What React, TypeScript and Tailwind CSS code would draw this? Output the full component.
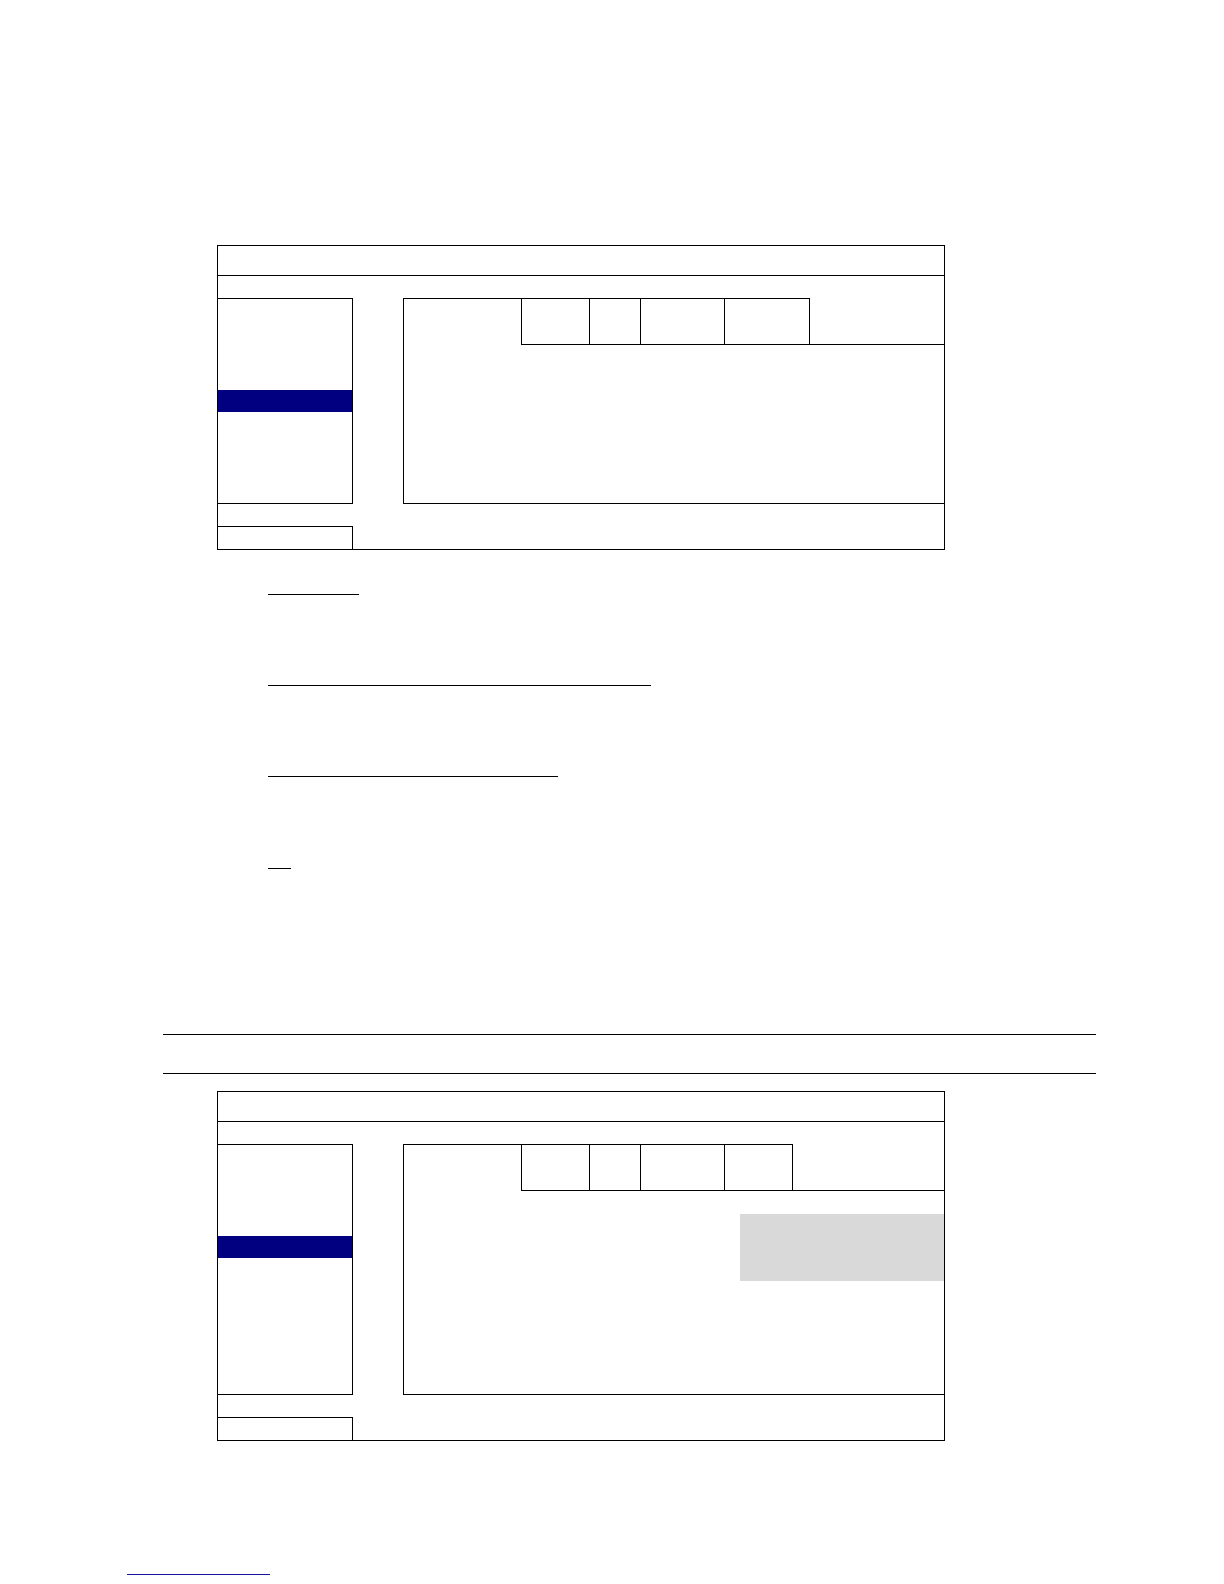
import React from 'react';

type Panel = {
  cellWidths: number[]; // widths of the bordered header cells
  bodyHeight: string;
  showPopup?: boolean;
};

// widths are written out so Tailwind picks them up
const cellClass: Record<number, string> = {
  68: 'w-[68px]',
  51: 'w-[51px]',
  84: 'w-[84px]',
  85: 'w-[85px]',
  69: 'w-[69px]',
};

const MenuScreen: React.FC<Panel> = ({ cellWidths, bodyHeight, showPopup }) => {
  return (
    <div className="ml-[217px] w-[728px] border border-black flex flex-col">
      {/* title bar */}
      <div className="h-[30px] border-b border-black" />
      <div className="h-[22px]" />

      {/* menu + content */}
      <div className={`flex ${bodyHeight}`}>
        <div className="w-[135px] border-t border-b border-r border-black flex flex-col pt-[91px]">
          <div className="h-[22px] bg-[#000080]" />
        </div>
        <div className="w-[50px]" />
        <div className="flex-1 border-l border-b border-black flex flex-col">
          <div className="flex h-[47px]">
            <div className="w-[117px] border-t border-black" />
            {cellWidths.map((w, i) => (
              <div key={i} className={`${cellClass[w]} border-t border-b border-l border-black`} />
            ))}
            <div className="flex-1 border-l border-b border-black" />
          </div>
          <div className="flex-1 flex flex-col">
            {showPopup && <div className="self-end mt-[23px] w-[204px] h-[67px] bg-[#d9d9d9]" />}
          </div>
        </div>
      </div>

      {/* status row */}
      <div className="h-[45px] flex flex-col pt-[22px]">
        <div className="w-[135px] flex-1 border-t border-r border-black" />
      </div>
    </div>
  );
};

export default function App() {
  return (
    <div className="w-[1224px] h-[1584px] bg-white flex flex-col pt-[245px] font-['Liberation_Sans',sans-serif]">
      <MenuScreen cellWidths={[68, 51, 84, 85]} bodyHeight="h-[206px]" />

      <div className="ml-[268px] mt-[44px] w-[91px] h-px bg-black" />
      <div className="ml-[268px] mt-[90px] w-[383px] h-px bg-black" />
      <div className="ml-[268px] mt-[90px] w-[290px] h-px bg-black" />
      <div className="ml-[268px] mt-[91px] w-[23px] h-px bg-black" />

      <div className="ml-[163px] mt-[165px] w-[933px] h-px bg-black" />
      <div className="ml-[163px] mt-[38px] w-[933px] h-px bg-black" />

      <div className="mt-[17px]">
        <MenuScreen cellWidths={[68, 51, 84, 68]} bodyHeight="h-[251px]" showPopup />
      </div>

      <div className="ml-[127px] mt-[133px] w-[143px] h-px bg-[#1515a5]" />
    </div>
  );
}
